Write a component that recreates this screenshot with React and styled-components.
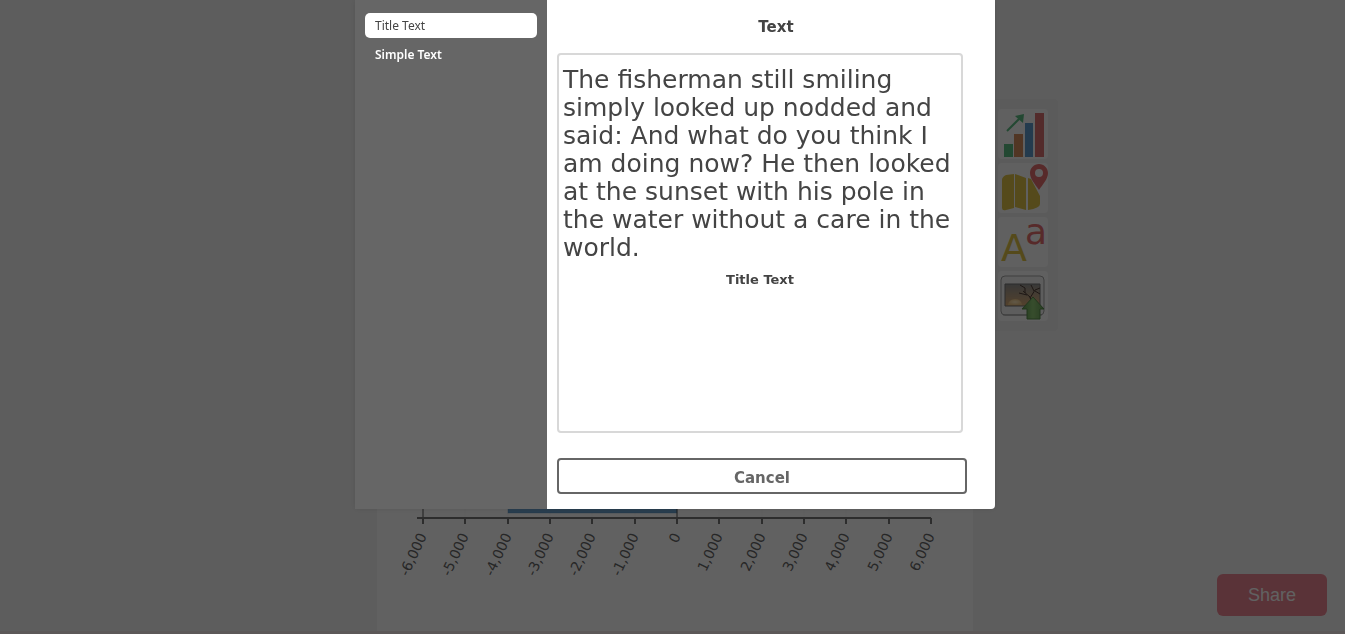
import React from "react";
import styled, { createGlobalStyle } from "styled-components";

const Global = createGlobalStyle`
  * { box-sizing: border-box; }
  body { margin: 0; background: #f5f5f5; font-family: "DejaVu Sans", Verdana, sans-serif; color: #444; }
  button { font: inherit; cursor: pointer; }
`;

const Page = styled.div`
  position: relative;
  height: 100vh;
  padding-left: 5px;
  overflow: hidden;
  display: flex;
  justify-content: center;
  align-items: flex-start;
  border-bottom: 3px solid #f2e6e8;
`;

const Canvas = styled.main`
  width: 596px;
  height: 100%;
  background: #fff;
  display: flex;
  flex-direction: column;
  justify-content: flex-end;
`;

const Chart = styled.svg`
  display: block;
  width: 100%;
  height: 140px;
  font-family: "DejaVu Sans", Verdana, sans-serif;
  font-size: 14px;
`;

const Tools = styled.nav`
  position: absolute;
  top: 99px;
  left: calc(50% + 316px);
  width: 69px;
  padding: 10px 9px;
  display: flex;
  flex-direction: column;
  gap: 4px;
  background: #efefef;
  border-radius: 4px;
`;

const Tool = styled.button`
  width: 50px;
  height: 50px;
  padding: 0;
  border: 0;
  border-radius: 4px;
  background: #fdfdfd;
  svg { display: block; width: 50px; height: 50px; overflow: visible; opacity: 0.9; }
`;

const Share = styled.button`
  position: absolute;
  right: 18px;
  bottom: 15px;
  width: 110px;
  height: 42px;
  border: 0;
  border-radius: 6px;
  background: #ed8693;
  color: #fff;
  && { font-family: "Liberation Sans", Arial, sans-serif; font-size: 18px; }
`;

const Overlay = styled.div`
  position: fixed;
  inset: 0;
  padding-left: 5px;
  display: flex;
  justify-content: center;
  align-items: flex-start;
  background: rgba(0, 0, 0, 0.62);
`;

const Dialog = styled.section`
  width: 640px;
  max-width: 100%;
  display: flex;
  overflow: hidden;
  border-radius: 0 0 4px 0;
  background: #fff;
  box-shadow: 0 0 6px rgba(0, 0, 0, 0.1);
`;

const Sidebar = styled.div`
  width: 192px;
  padding: 13px 10px;
  display: flex;
  flex-direction: column;
  gap: 4px;
  background: #666;
`;

const Option = styled.button`
  height: 25px;
  padding: 0 10px;
  border: 0;
  border-radius: 5px;
  text-align: left;
  background: ${(p) => (p.$active ? "#fff" : "transparent")};
  color: ${(p) => (p.$active ? "#444" : "#fff")};
  && {
    font-family: "Noto Sans", Tahoma, sans-serif;
    font-size: 12px;
    font-weight: ${(p) => (p.$active ? 400 : 600)};
  }
`;

const Content = styled.div`
  flex: 1;
  padding: 17px 28px 15px 10px;
  display: flex;
  flex-direction: column;
`;

const Heading = styled.h2`
  margin: 0 -28px 16px 0;
  text-align: center;
  font-size: 15px;
  line-height: 20px;
`;

const Preview = styled.div`
  height: 380px;
  margin-right: 4px;
  padding: 11px 4px;
  border: 2px solid #d8d8d8;
  border-radius: 4px;
`;

const Sample = styled.p`
  margin: 0;
  font-size: 25px;
  line-height: 28px;
`;

const Caption = styled.h3`
  margin: 10px 0 0;
  text-align: center;
  font-size: 13px;
  line-height: 16px;
`;

const Cancel = styled.button`
  height: 36px;
  margin-top: 25px;
  padding: 3px 0 0;
  border: 2px solid #666;
  border-radius: 4px;
  background: #fff;
  color: #666;
  && { font-size: 15px; font-weight: 700; }
`;

const ticks = ["-6,000", "-5,000", "-4,000", "-3,000", "-2,000", "-1,000", "0", "1,000", "2,000", "3,000", "4,000", "5,000", "6,000"];

const tickX = (i) => Math.round(46 + (i * 508) / 12);

function Axis() {
  return (
    <Chart viewBox="0 0 596 140" role="img" aria-label="Bar chart">
      {ticks.map((t, i) => (
        <path key={t} d={`M${tickX(i)} 0V27`} stroke="#f7f7f7" />
      ))}
      <rect x="131" y="0" width="169" height="22" fill="#6ca3cf" stroke="#4682b4" strokeOpacity=".3" />
      <path d="M46 0V33M300 0V27" stroke="#555" strokeWidth="1" />
      <path d="M40 27H554" stroke="#777" strokeWidth="2" />
      {ticks.map((t, i) => (
        <g key={t} transform={`translate(${tickX(i)} 27)`}>
          <path d="M0 0V6" stroke="#777" strokeWidth="2" />
          <text transform="translate(4 18) rotate(-65)" textAnchor="end" fill="#666">{t}</text>
        </g>
      ))}
    </Chart>
  );
}

const ChartIcon = () => (
  <svg viewBox="0 0 50 50">
    <path d="M6 35h9v13H6z" fill="#4cb877" />
    <path d="M16 25h9v23h-9z" fill="#d08450" />
    <path d="M27 14h8v34h-8z" fill="#5091c8" />
    <path d="M37 4h9v44h-9z" fill="#d86464" />
    <path d="M9 22 23 8" stroke="#4cb877" strokeWidth="2" />
    <path d="M17 7l9-2-1 9z" fill="#4cb877" />
  </svg>
);

const MapIcon = () => (
  <svg viewBox="0 0 50 50">
    <path d="M4 17Q4 14 8 12l8-1v34l-8 2q-4 1-4-2zM17 11l11 4v32l-11-3zM30 15l3 1 9 17v8q0 4-12 6z" fill="#dcbd35" />
    <path d="M41 1c-5 0-9 4-9 9 0 6 5 11 9 17 4-6 9-11 9-17 0-5-4-9-9-9zm0 5a4 4 0 1 1 0 8 4 4 0 0 1 0-8z" fill="#e36161" fillRule="evenodd" />
  </svg>
);

const LetterIcon = () => (
  <svg viewBox="0 0 50 50" fontFamily="DejaVu Sans, Verdana, sans-serif">
    <text x="3" y="44" fontSize="38" fill="#dcbd35">A</text>
    <text x="27" y="27" fontSize="36" fill="#e36161">a</text>
  </svg>
);

const PhotoIcon = () => (
  <svg viewBox="0 0 50 50">
    <defs>
      <linearGradient id="sky" x2="0" y2="1">
        <stop stopColor="#888" /><stop offset="1" stopColor="#d9a467" />
      </linearGradient>
      <linearGradient id="leaf"><stop stopColor="#4f9140" /><stop offset=".5" stopColor="#86c568" /><stop offset="1" stopColor="#5a9746" /></linearGradient>
      <radialGradient id="sun"><stop stopColor="#ffe9b8" /><stop offset="1" stopColor="#e9bd78" /></radialGradient>
    </defs>
    <rect x="3" y="5" width="43" height="39" rx="4" fill="#f4f4f4" stroke="#999" />
    <path d="M5 44h39" stroke="#999" />
    <path d="M7 13h35v22H7z" fill="url(#sky)" stroke="#666" />
    <path d="M10 34a7 6 0 0 1 14 0z" fill="url(#sun)" />
    <path d="M34 34 32 26 25 20M29 24l-8-2M27 22v-5l-5-3M32 27l5-8 5-2M36 20l-3-6M37 20l5 3" fill="none" stroke="#3c2921" strokeWidth="1" />
    <path d="M35 26 46 38h-4v10H29V38h-5z" fill="url(#leaf)" stroke="#47803a" />
  </svg>
);

export default function App() {
  return (
    <>
      <Global />
      <Page>
        <Canvas><Axis /></Canvas>
        <Tools aria-label="Widgets">
          <Tool aria-label="Chart"><ChartIcon /></Tool>
          <Tool aria-label="Map"><MapIcon /></Tool>
          <Tool aria-label="Text"><LetterIcon /></Tool>
          <Tool aria-label="Image"><PhotoIcon /></Tool>
        </Tools>
        <Share>Share</Share>
      </Page>
      <Overlay>
        <Dialog role="dialog" aria-label="Text">
          <Sidebar>
            <Option $active>Title Text</Option>
            <Option>Simple Text</Option>
          </Sidebar>
          <Content>
            <Heading>Text</Heading>
            <Preview>
              <Sample>The fisherman still smiling simply looked up nodded and said: And what do you think I am doing now? He then looked at the sunset with his pole in the water without a care in the world.</Sample>
              <Caption>Title Text</Caption>
            </Preview>
            <Cancel>Cancel</Cancel>
          </Content>
        </Dialog>
      </Overlay>
    </>
  );
}
